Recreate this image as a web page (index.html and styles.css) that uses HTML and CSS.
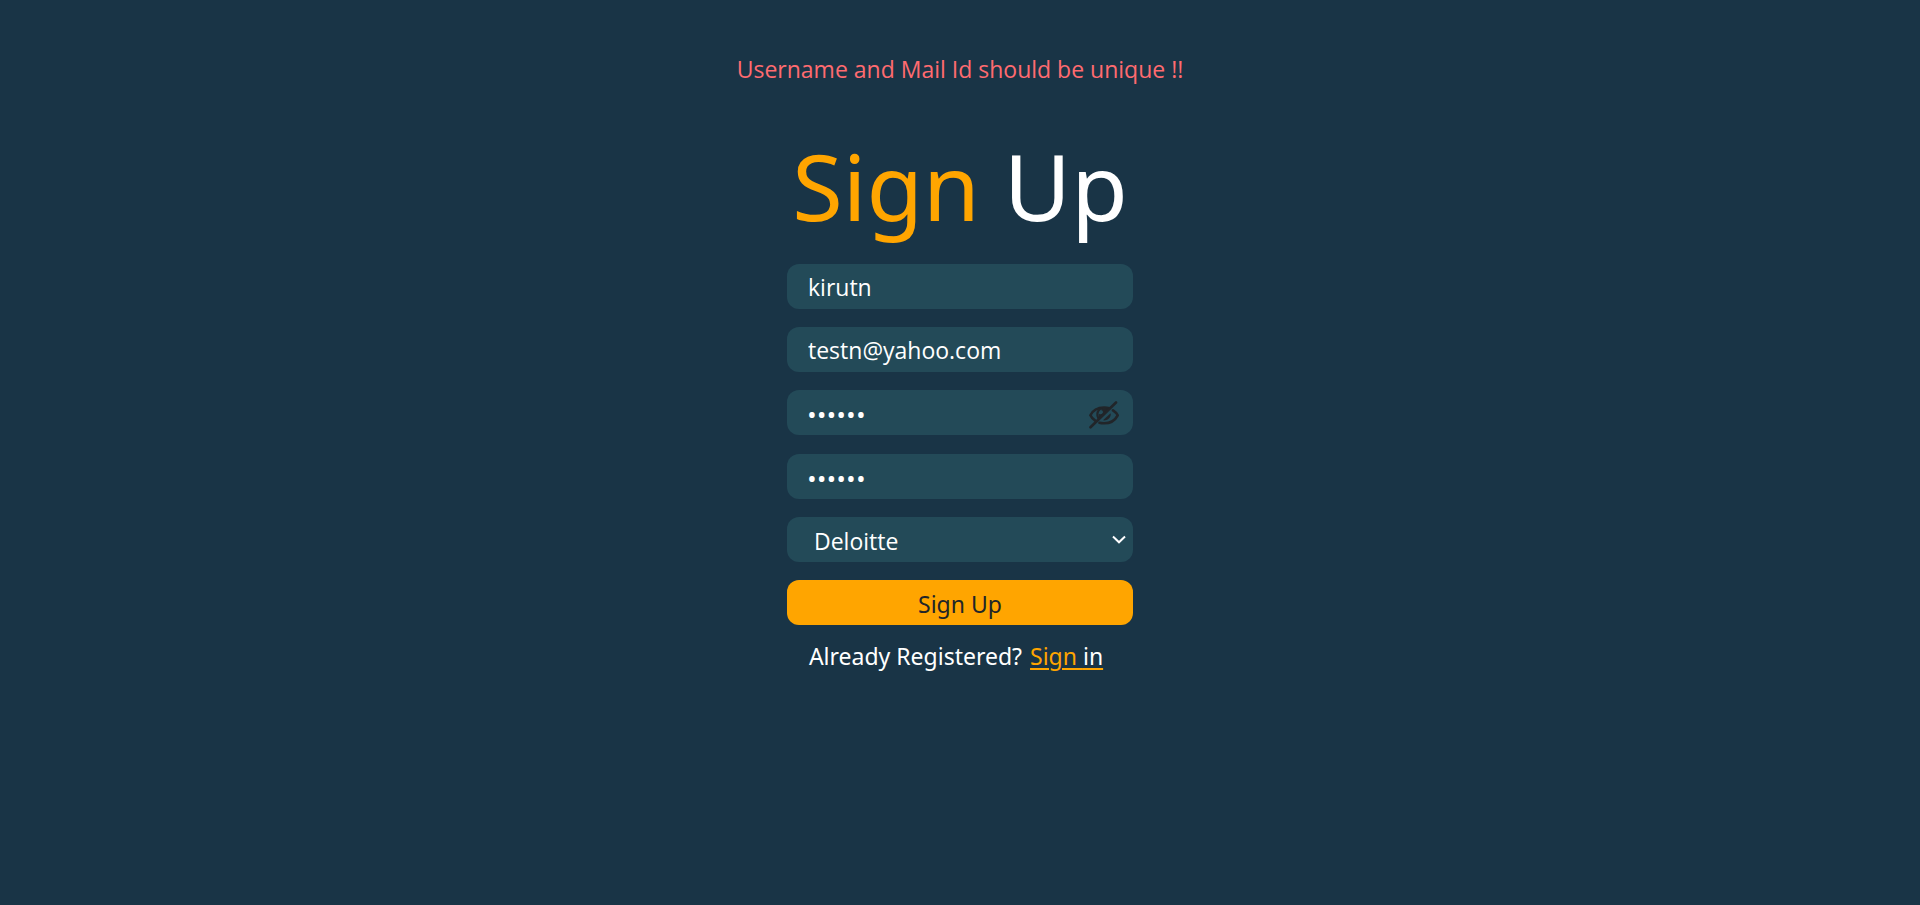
FILE: index.html
```
<!DOCTYPE html>
<html lang="en">
<head>
<meta charset="utf-8">
<title>Sign Up</title>
<link rel="stylesheet" href="styles.css">
</head>
<body>
<main class="page">
  <p class="error" role="alert">Username and Mail Id should be unique !!</p>
  <h1 class="title"><span class="accent">Sign</span> Up</h1>
  <form class="form">
    <input class="field" type="text" aria-label="Username" value="kirutn">
    <input class="field" type="email" aria-label="Mail Id" value="testn@yahoo.com">
    <div class="password">
      <input class="field secret" type="password" aria-label="Password" value="secret">
      <button class="toggle" type="button" aria-label="Show password">
        <svg class="eye" viewBox="0 0 30 28" fill="none" stroke="currentColor" stroke-width="2.6" stroke-linecap="round">
          <path d="M6.500 19.800C4 18.300 2.300 16.300 1.400 14.300C4 9 9 6.500 15 6.500Q18 6.500 20.300 7.300"/>
          <path d="M24 9.300C26.200 10.700 27.900 12.500 28.700 14.300C26 19.500 21 22.300 15 22.300Q12.400 22.300 10.500 21.800"/>
          <path d="M9.500 17.500Q6.500 12 11 8" stroke-width="2.200"/>
          <path d="M21.600 12.300C22.500 16 19 20 14 19.300Z" fill="currentColor" stroke="none"/>
          <path d="M19.500 8.300C17 6.600 13.500 7 11.500 9C12.500 8.800 14 9.600 14 11.300C13.700 13 11.700 13.800 10 12.700C9.400 14.600 9.900 16.200 10.900 17.200Z" fill="currentColor" stroke="none"/>
          <path d="M1.500 26.300L27 1.500"/>
        </svg>
      </button>
    </div>
    <input class="field secret" type="password" aria-label="Confirm password" value="secret">
    <div class="select">
      <select class="field choice" aria-label="Company"><option>Deloitte</option></select>
      <svg class="chevron" viewBox="0 0 14 9" fill="none" stroke="currentColor" stroke-width="2"><path d="M1 1.500L7 7.300L13 1.500"/></svg>
    </div>
    <button class="submit" type="submit">Sign Up</button>
  </form>
  <p class="signin">Already Registered? <a class="link" href="#signin">Sign <span class="light">in</span></a></p>
</main>
</body>
</html>
```
FILE: styles.css
```
* { box-sizing: border-box; }
body {
  margin: 0;
  min-height: 100vh;
  background: #193446;
  color: #fff;
  font: 23px/36px "Noto Sans", "Open Sans", sans-serif;
}
.page {
  display: flex;
  flex-direction: column;
  align-items: center;
  padding: 51px 16px;
}
.error {
  margin: 0;
  color: #ff6b70;
  font-family: "Open Sans", "Noto Sans", sans-serif;
}
.title {
  margin: 41px 0 20px;
  font-size: 92px;
  line-height: 116px;
  font-weight: 400;
}
.accent { color: orange; }
.form {
  display: flex;
  flex-direction: column;
  gap: 18px;
  width: 100%;
  max-width: 346px;
}
.field, .submit {
  display: block;
  width: 100%;
  height: 45px;
  border: 0;
  border-radius: 12px;
  font: inherit;
}
.field {
  padding: 1px 21px 0;
  background: #234a58;
  color: #fff;
  outline: 0;
  font-family: "Open Sans", "Noto Sans", sans-serif;
}
.secret { padding: 2px 20px 0; font-size: 26px; }
.password, .select { position: relative; }
.password { margin-bottom: 1px; }
.toggle {
  position: absolute;
  top: 11px;
  right: 14px;
  width: 30px;
  height: 28px;
  padding: 0;
  border: 0;
  background: none;
  color: #212529;
}
.eye { display: block; width: 30px; height: 28px; }
.choice { appearance: none; padding: 2px 28px 0 27px; }
.chevron {
  position: absolute;
  top: 18px;
  right: 7px;
  width: 14px;
  height: 9px;
  pointer-events: none;
}
.submit { padding: 2px 0 0; background: orange; color: #212529; }
.signin { margin: 13px 0 0; padding-right: 8px; }
.link { margin-left: 2px; color: orange; text-underline-offset: 3px; text-decoration-thickness: 2px; }
.light { color: #fff; }
```
